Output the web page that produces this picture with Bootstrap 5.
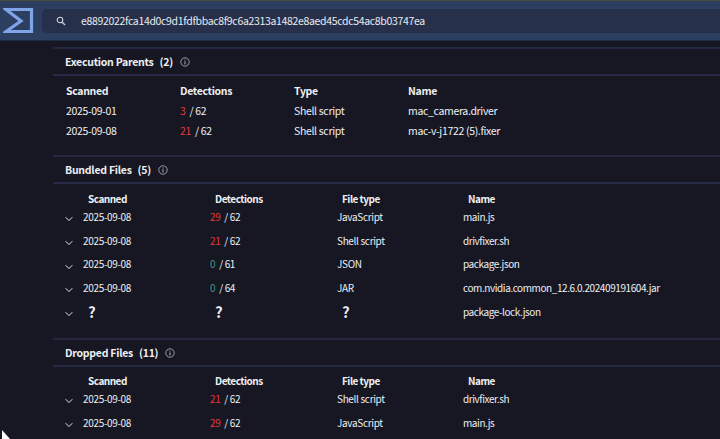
<!DOCTYPE html>
<html lang="en"><head><meta charset="utf-8"><title>Relations</title>
<link href="https://cdn.jsdelivr.net/npm/bootstrap@5.3.0/dist/css/bootstrap.min.css" rel="stylesheet">
<style>
html,body{height:100%;overflow:hidden}
body{background:#161722;color:#eef0f4;font-family:"Noto Sans CJK SC","Noto Sans",sans-serif;font-size:10px;letter-spacing:-.33px;line-height:14px}
.topbar{height:41px;background:#2d3f61;border-top:1px solid #4b4a3f;border-bottom:1px solid #1f2b42}
.logo{width:36px;height:36px;margin-left:3px;margin-top:2px;flex:none}
.searchbox{margin-left:3px;margin-top:8px;height:24px;flex:1;background:#26304a;border-radius:5px 0 0 5px;padding-left:14px;color:#e8ebf0;font-size:10.5px}
.searchbox svg{margin-right:15px}
.sect{margin-left:53px;border-top:2px solid #232840}
.sect-head{height:27px;padding-left:12px;border-bottom:2px solid #252b45;font-weight:700;font-size:10.5px;letter-spacing:-.25px}
.count{margin-left:6px}
.info{margin-left:7px;flex:none}
.cols-a{display:grid;grid-template-columns:114px 114px 114px 1fr;padding-left:13px;font-size:10.5px}
.cols-b{display:grid;grid-template-columns:127px 127px 126px 1fr;padding-left:30px}
.th{font-weight:700}
.cols-a.th{padding-top:8px;height:25px}
.cols-a.tr{height:20px;align-items:center}
.cols-b.th{padding-top:8px;height:21px;letter-spacing:-.5px}
.sec3 .cols-b.th{padding-top:7px;height:20px}
.cols-b.th>span{padding-left:5px}
.cols-b.tr{height:23.8px;align-items:center;position:relative}
.cols-b.tr>span:last-child{letter-spacing:-.42px}
.chev{position:absolute;left:12px;top:11px}
.bad{color:#e5393c;margin-right:2px}
.ok{color:#3b9c8b;margin-right:2px}
.unk{font-size:15px;font-weight:700;padding-left:5px}
.sec1{margin-top:6px;height:108px}
.sec2{height:183px}
.pointer{position:absolute;left:2px;top:430px}
</style></head><body>
<div class="topbar d-flex">
<svg class="logo" viewBox="0 0 36 36"><path d="M3 6.5H28.5V28.5H3L18 18Z" fill="none" stroke="#7fa4e8" stroke-width="3.2"/></svg>
<div class="searchbox d-flex align-items-center"><svg width="10" height="10" viewBox="0 0 10 10" class="flex-none"><circle cx="4" cy="4" r="2.8" fill="none" stroke="#cfd4dc" stroke-width="1.1"/><path d="M6 6L9 9" stroke="#cfd4dc" stroke-width="1.3"/></svg><span>e8892022fca14d0c9d1fdfbbac8f9c6a2313a1482e8aed45cdc54ac8b03747ea</span></div>
</div>
<section class="sect sec1">
<div class="sect-head d-flex align-items-center"><span>Execution Parents</span><span class="count">(2)</span><svg class="info" width="10" height="10" viewBox="0 0 10 10"><circle cx="5" cy="5" r="4.2" fill="none" stroke="#b5bac4" stroke-width=".8"/><path d="M5 4.4V7.4M5 2.6V3.5" stroke="#b5bac4"/></svg></div>
<div class="cols-a th"><span>Scanned</span><span>Detections</span><span>Type</span><span>Name</span></div>
<div class="cols-a tr"><span>2025-09-01</span><span><span class="bad">3</span> / 62</span><span>Shell script</span><span>mac_camera.driver</span></div>
<div class="cols-a tr"><span>2025-09-08</span><span><span class="bad">21</span> / 62</span><span>Shell script</span><span>mac-v-j1722 (5).fixer</span></div>
</section>
<section class="sect sec2">
<div class="sect-head d-flex align-items-center"><span>Bundled Files</span><span class="count">(5)</span><svg class="info" width="10" height="10" viewBox="0 0 10 10"><circle cx="5" cy="5" r="4.2" fill="none" stroke="#b5bac4" stroke-width=".8"/><path d="M5 4.4V7.4M5 2.6V3.5" stroke="#b5bac4"/></svg></div>
<div class="cols-b th"><span>Scanned</span><span>Detections</span><span>File type</span><span>Name</span></div>
<div class="cols-b tr"><svg class="chev" width="8" height="6" viewBox="0 0 8 6"><path d="M.7 1.2L4 4.6L7.3 1.2" fill="none" stroke="#dfe2e8"/></svg><span>2025-09-08</span><span><span class="bad">29</span> / 62</span><span>JavaScript</span><span>main.js</span></div>
<div class="cols-b tr"><svg class="chev" width="8" height="6" viewBox="0 0 8 6"><path d="M.7 1.2L4 4.6L7.3 1.2" fill="none" stroke="#dfe2e8"/></svg><span>2025-09-08</span><span><span class="bad">21</span> / 62</span><span>Shell script</span><span>drivfixer.sh</span></div>
<div class="cols-b tr"><svg class="chev" width="8" height="6" viewBox="0 0 8 6"><path d="M.7 1.2L4 4.6L7.3 1.2" fill="none" stroke="#dfe2e8"/></svg><span>2025-09-08</span><span><span class="ok">0</span> / 61</span><span>JSON</span><span>package.json</span></div>
<div class="cols-b tr"><svg class="chev" width="8" height="6" viewBox="0 0 8 6"><path d="M.7 1.2L4 4.6L7.3 1.2" fill="none" stroke="#dfe2e8"/></svg><span>2025-09-08</span><span><span class="ok">0</span> / 64</span><span>JAR</span><span>com.nvidia.common_12.6.0.202409191604.jar</span></div>
<div class="cols-b tr"><svg class="chev" width="8" height="6" viewBox="0 0 8 6"><path d="M.7 1.2L4 4.6L7.3 1.2" fill="none" stroke="#dfe2e8"/></svg><span class="unk">?</span><span class="unk">?</span><span class="unk">?</span><span>package-lock.json</span></div>
</section>
<section class="sect sec3">
<div class="sect-head d-flex align-items-center"><span>Dropped Files</span><span class="count">(11)</span><svg class="info" width="10" height="10" viewBox="0 0 10 10"><circle cx="5" cy="5" r="4.2" fill="none" stroke="#b5bac4" stroke-width=".8"/><path d="M5 4.4V7.4M5 2.6V3.5" stroke="#b5bac4"/></svg></div>
<div class="cols-b th"><span>Scanned</span><span>Detections</span><span>File type</span><span>Name</span></div>
<div class="cols-b tr"><svg class="chev" width="8" height="6" viewBox="0 0 8 6"><path d="M.7 1.2L4 4.6L7.3 1.2" fill="none" stroke="#dfe2e8"/></svg><span>2025-09-08</span><span><span class="bad">21</span> / 62</span><span>Shell script</span><span>drivfixer.sh</span></div>
<div class="cols-b tr"><svg class="chev" width="8" height="6" viewBox="0 0 8 6"><path d="M.7 1.2L4 4.6L7.3 1.2" fill="none" stroke="#dfe2e8"/></svg><span>2025-09-08</span><span><span class="bad">29</span> / 62</span><span>JavaScript</span><span>main.js</span></div>
</section>
<svg class="pointer" width="9" height="9" viewBox="0 0 9 9"><path d="M0 0L8 9H0Z" fill="#fff"/></svg>
</body></html>
